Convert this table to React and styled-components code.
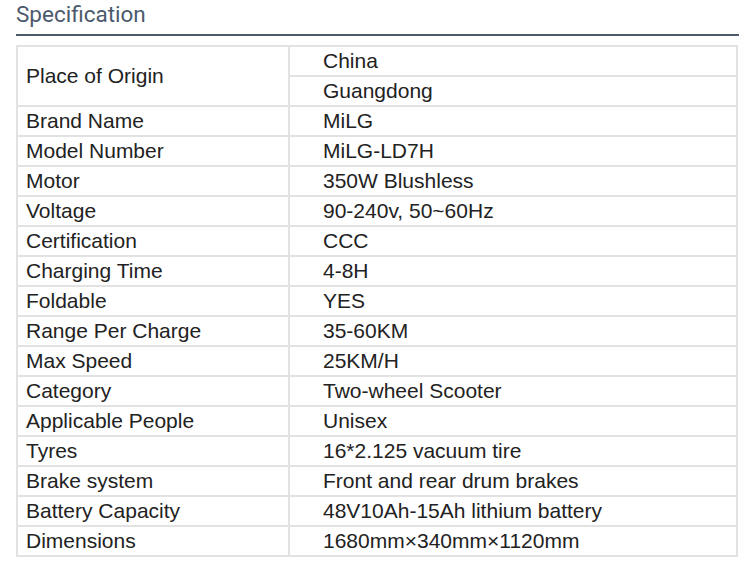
import React from 'react';
import styled, { createGlobalStyle } from 'styled-components';

const GlobalStyle = createGlobalStyle`
  html, body {
    margin: 0;
    padding: 0;
    background: #ffffff;
  }
`;

const Page = styled.div`
  width: 723px;
  padding-left: 16px;
`;

const Heading = styled.h2`
  margin: 0;
  padding: 1px 0 7px;
  font-family: Roboto, 'Open Sans', sans-serif;
  font-weight: 400;
  font-size: 22.5px;
  line-height: 26px;
  color: #4b596d;
  border-bottom: 2px solid #4e5a6b;
`;

const SpecTable = styled.table`
  margin-top: 9px;
  width: 722px;
  border-collapse: collapse;
  table-layout: fixed;
  font-family: 'Liberation Sans', Arial, sans-serif;
  font-size: 21px;
  color: #222222;
`;

const Cell = styled.td`
  height: 28px;
  padding: 0 0 0 ${props => (props.value ? '33px' : '8px')};
  border: 2px solid #e2e2e2;
  vertical-align: middle;
  line-height: 24px;
  white-space: nowrap;
`;

const specs = [
  ['Brand Name', 'MiLG'],
  ['Model Number', 'MiLG-LD7H'],
  ['Motor', '350W Blushless'],
  ['Voltage', '90-240v, 50~60Hz'],
  ['Certification', 'CCC'],
  ['Charging Time', '4-8H'],
  ['Foldable', 'YES'],
  ['Range Per Charge', '35-60KM'],
  ['Max Speed', '25KM/H'],
  ['Category', 'Two-wheel Scooter'],
  ['Applicable People', 'Unisex'],
  ['Tyres', '16*2.125 vacuum tire'],
  ['Brake system', 'Front and rear drum brakes'],
  ['Battery Capacity', '48V10Ah-15Ah lithium battery'],
  ['Dimensions', '1680mm×340mm×1120mm'],
];

export default function App() {
  return (
    <Page>
      <GlobalStyle />
      <Heading>Specification</Heading>
      <SpecTable>
        <colgroup>
          <col style={{ width: 272 }} />
          <col />
        </colgroup>
        <tbody>
          <tr>
            <Cell rowSpan={2}>Place of Origin</Cell>
            <Cell value>China</Cell>
          </tr>
          <tr>
            <Cell value>Guangdong</Cell>
          </tr>
          {specs.map(([label, val]) => (
            <tr key={label}>
              <Cell>{label}</Cell>
              <Cell value>{val}</Cell>
            </tr>
          ))}
        </tbody>
      </SpecTable>
    </Page>
  );
}
